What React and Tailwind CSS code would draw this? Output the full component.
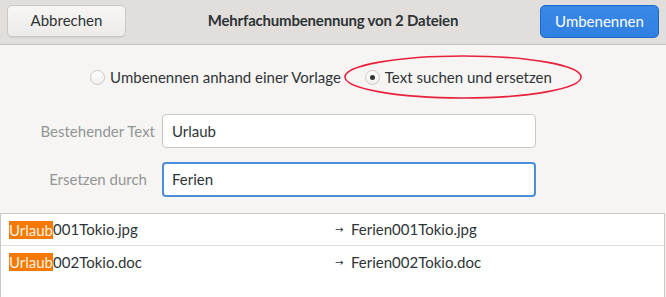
export default function App() {
  const rows = [
    { rest: "001Tokio.jpg", out: "Ferien001Tokio.jpg" },
    { rest: "002Tokio.doc", out: "Ferien002Tokio.doc" },
  ];
  return (
    <div className="relative w-[666px] h-[297px] overflow-hidden bg-[#f6f5f4] text-[#2e3436] flex flex-col font-['Lato',sans-serif] text-[15px]">
      <div className="h-[45px] shrink-0 bg-[#e1dedb] border-b border-[#c4c0bb] flex items-center justify-between px-[7px]">
        <button className="w-[119px] h-[32px] rounded-[5px] border border-[#cdc7c2] bg-gradient-to-b from-[#f7f6f5] to-[#edebe9] shadow-[0_1px_1px_rgba(0,0,0,0.07)] text-[15px] text-[#2e3436] -mt-[3px]">
          Abbrechen
        </button>
        <div className="font-bold text-[15px] tracking-[-0.2px] text-[#2e3436] -mt-[3px]">Mehrfachumbenennung von 2 Dateien</div>
        <button className="w-[119px] h-[33px] rounded-[5px] border border-[#1b6acb] bg-gradient-to-b from-[#3a88e6] to-[#3080e2] text-white text-[15px] -mt-[2px]">
          Umbenennen
        </button>
      </div>

      <div className="h-[43px] mt-[11px] flex items-center justify-center gap-[24px] pr-[24px]">
        <label className="flex items-center gap-[5px]">
          <span className="w-[15px] h-[15px] rounded-full border border-[#cdc7c2] bg-gradient-to-b from-white to-[#f0efee]"></span>
          <span>Umbenennen anhand einer Vorlage</span>
        </label>
        <label className="flex items-center gap-[5px]">
          <span className="w-[15px] h-[15px] rounded-full border border-[#cdc7c2] bg-gradient-to-b from-white to-[#f0efee] flex items-center justify-center">
            <span className="w-[5px] h-[5px] rounded-full bg-[#2e3436]"></span>
          </span>
          <span>Text suchen und ersetzen</span>
        </label>
      </div>

      <div className="mt-[15px] flex flex-col gap-[14px]">
        <div className="flex items-center">
          <div className="w-[155px] text-right text-[#929595]">Bestehender Text</div>
          <div className="ml-[7px] w-[374px] h-[34px] rounded-[4px] border border-[#cdc7c2] bg-white flex items-center px-[9px]">Urlaub</div>
        </div>
        <div className="flex items-center">
          <div className="w-[155px] text-right text-[#929595] pr-[8px]">Ersetzen durch</div>
          <div className="ml-[7px] w-[374px] h-[35px] rounded-[4px] border-2 border-[#4a90d9] bg-white flex items-center px-[8px]">Ferien</div>
        </div>
      </div>

      <div className="mt-[16px] flex-1 bg-white border-t border-l border-r border-[#cdc7c2] mr-[1px]">
        {rows.map((r, i) => (
          <div key={i} className={"h-[32px] flex items-center " + (i === 0 ? "border-b border-[#e0dedb]" : "")}>
            <div className="w-[334px] pl-[8px] flex items-center">
              <span className="bg-[#f57900] text-[#fdf0e0] leading-[18px]">Urlaub</span>
              <span>{r.rest}</span>
            </div>
            <div className="w-[16px] text-[10px] font-['DejaVu_Sans',sans-serif]">→</div>
            <div>{r.out}</div>
          </div>
        ))}
      </div>

      <svg className="absolute left-[343px] top-[54px] pointer-events-none" width="242" height="48" viewBox="0 0 242 48">
        <ellipse cx="120" cy="23" rx="118" ry="21" fill="none" stroke="#e8213c" strokeWidth="1.6" />
      </svg>
    </div>
  );
}
